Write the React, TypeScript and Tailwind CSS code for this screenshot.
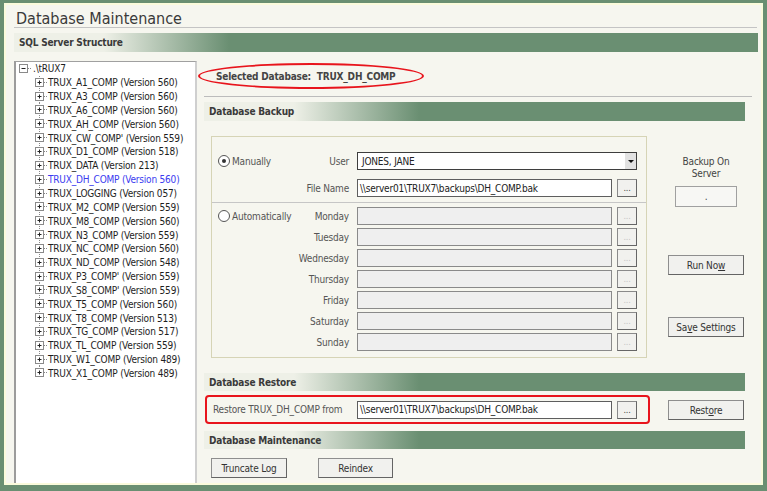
import React from 'react';

const FONT = { fontFamily: "'DejaVu Sans Condensed', 'DejaVu Sans', sans-serif" };

const items: [string, string, boolean?][] = [
  ['TRUX_A1_COMP', '560'],
  ['TRUX_A3_COMP', '560'],
  ['TRUX_A6_COMP', '560'],
  ['TRUX_AH_COMP', '560'],
  ["TRUX_CW_COMP'", '559'],
  ['TRUX_D1_COMP', '518'],
  ['TRUX_DATA', '213'],
  ['TRUX_DH_COMP', '560', true],
  ['TRUX_LOGGING', '057'],
  ['TRUX_M2_COMP', '559'],
  ['TRUX_M8_COMP', '560'],
  ['TRUX_N3_COMP', '559'],
  ['TRUX_NC_COMP', '560'],
  ['TRUX_ND_COMP', '548'],
  ["TRUX_P3_COMP'", '559'],
  ["TRUX_S8_COMP'", '559'],
  ['TRUX_T5_COMP', '560'],
  ['TRUX_T8_COMP', '513'],
  ['TRUX_TG_COMP', '517'],
  ['TRUX_TL_COMP', '559'],
  ['TRUX_W1_COMP', '489'],
  ['TRUX_X1_COMP', '489'],
];

function Bar({ title, className = '' }: { title: string; className?: string }) {
  return (
    <div
      className={`flex items-center pl-[5px] text-[10px] font-bold text-[#3a3a3a] bg-[linear-gradient(to_right,#eef0e7_90px,#6a8f72_215px)] ${className}`}
    >
      {title}
    </div>
  );
}

function Expander({ last, root }: { last?: boolean; root?: boolean }) {
  if (root) {
    return (
      <svg width="16" height="14" className="shrink-0">
        <rect x="2.5" y="2.5" width="8" height="8" fill="#fff" stroke="#8a8a8a" />
        <line x1="4.5" y1="6.5" x2="8.5" y2="6.5" stroke="#222" />
        <line x1="11" y1="6.5" x2="15" y2="6.5" stroke="#888" strokeDasharray="1 1" />
      </svg>
    );
  }
  return (
    <svg width="17" height="14" className="shrink-0 overflow-visible">
      <line x1="8.5" y1="0" x2="8.5" y2={last ? 7 : 14} stroke="#888" strokeDasharray="1 1" />
      <rect x="4.5" y="2.5" width="8" height="8" fill="#fff" stroke="#8a8a8a" />
      <line x1="6.5" y1="6.5" x2="10.5" y2="6.5" stroke="#222" />
      <line x1="8.5" y1="4.5" x2="8.5" y2="8.5" stroke="#222" />
      <line x1="13" y1="6.5" x2="17" y2="6.5" stroke="#888" strokeDasharray="1 1" />
    </svg>
  );
}

function Btn({ children, className = '' }: { children: React.ReactNode; className?: string }) {
  return (
    <div
      className={`flex items-center justify-center border border-[#8e8e8e] border-r-[#646464] border-b-[#646464] bg-[#f1f1ee] text-[10px] text-[#333] ${className}`}
    >
      {children}
    </div>
  );
}

function Dots({ disabled }: { disabled?: boolean }) {
  return (
    <div
      className={`w-[20px] h-[18px] ml-[5px] shrink-0 flex items-end justify-center pb-[3px] border border-[#8a8a8a] border-r-[#666] border-b-[#666] bg-[#f1f1ee] text-[9px] leading-[9px] ${disabled ? 'text-[#c4c4c4]' : 'text-[#444]'}`}
    >
      ...
    </div>
  );
}

function Radio({ checked, label }: { checked?: boolean; label: string }) {
  return (
    <div className="flex items-center w-[74px] shrink-0 whitespace-nowrap">
      <div className="w-[12px] h-[12px] shrink-0 rounded-full border border-[#555] bg-white flex items-center justify-center">
        {checked && <div className="w-[4px] h-[4px] rounded-full bg-[#333]" />}
      </div>
      <span className="ml-[2px] text-[#555]">{label}</span>
    </div>
  );
}

function Label({ text }: { text: string }) {
  return <div className="w-[57px] shrink-0 text-right text-[#555]">{text}</div>;
}

export default function App() {
  const days = ['Monday', 'Tuesday', 'Wednesday', 'Thursday', 'Friday', 'Saturday', 'Sunday'];
  return (
    <div
      className="w-[767px] h-[491px] bg-[#6a8f72] pt-[3px] px-[4px] pb-[6px] text-[10px] tracking-[-0.2px]"
      style={FONT}
    >
      <div className="h-full border-2 border-[#fbfbdc] bg-[#f6f6ef] flex flex-col pl-[8px] pr-[3px] overflow-hidden">
        <div className="h-[23px] shrink-0 border-b border-[#c4c4c4] flex items-end pl-[2px] mr-[1px] text-[16px] leading-[16px] tracking-normal text-[#3a3a3a]">
          Database Maintenance
        </div>
        <Bar title="SQL Server Structure" className="mt-[5px] h-[19px] shrink-0" />
        <div className="flex flex-1 mt-[9px] min-h-0">
          {/* Tree */}
          <div className="w-[183px] shrink-0 bg-white border-t border-t-[#a0a0a0] border-l-2 border-l-[#9c9c9c] border-r-2 border-r-[#cfcfcf] text-[#1e1e1e]">
            <div className="flex items-center h-[13.85px] pl-[1px]">
              <Expander root />
              <span>.\tRUX7</span>
            </div>
            {items.map(([name, ver, sel], i) => (
              <div key={name} className="flex items-center h-[13.85px] pl-[15px]">
                <Expander last={i === items.length - 1} />
                <span className={`whitespace-nowrap ${sel ? 'text-[#3b3bf0]' : ''}`}>
                  {name} (Version {ver})
                </span>
              </div>
            ))}
          </div>

          {/* Right side */}
          <div className="flex-1 flex flex-col pl-[7px]">
            <div className="ml-[-6px] mt-[2px] h-[26px] w-[226px] rounded-[50%] border-2 border-[#e8141c] flex items-center pl-[16px] font-bold text-[#444] whitespace-nowrap">
              Selected Database:&nbsp;&nbsp;TRUX_DH_COMP
            </div>
            <div className="mt-[7px] h-px w-[548px] bg-[#bcbcbc]" />
            <Bar title="Database Backup" className="mt-[5px] h-[19px] w-[541px]" />

            <div className="flex mt-[15px]">
              <div className="ml-[7px] w-[436px] h-[222px] border border-[#d6d4b6] flex flex-col">
                <div className="pt-[15px] pb-[5px] pl-[6px] border-b border-[#c6c6c6]">
                  <div className="flex items-center h-[18px]">
                    <Radio checked label="Manually" />
                    <Label text="User" />
                    <div className="ml-[8px] w-[280px] h-[18px] border border-[#3e3e3e] bg-white flex items-center">
                      <span className="flex-1 pl-[4px] text-[#222]">JONES, JANE</span>
                      <div className="w-[11px] h-full bg-[#e2e2e2] flex items-center justify-center">
                        <div className="w-0 h-0 border-l-[3px] border-r-[3px] border-t-[3px] border-l-transparent border-r-transparent border-t-[#111]" />
                      </div>
                    </div>
                  </div>
                  <div className="flex items-center h-[18px] mt-[9px]">
                    <div className="w-[74px] shrink-0" />
                    <Label text="File Name" />
                    <div className="ml-[8px] w-[255px] h-[18px] border border-[#5e5e5e] bg-white flex items-center pl-[2px] text-[#222] whitespace-nowrap overflow-hidden">
                      \\server01\TRUX7\backups\DH_COMP.bak
                    </div>
                    <Dots />
                  </div>
                </div>
                <div className="pt-[4px] pl-[6px] flex flex-col gap-[3px]">
                  {days.map((d, i) => (
                    <div key={d} className="flex items-center h-[18px]">
                      {i === 0 ? <Radio label="Automatically" /> : <div className="w-[74px] shrink-0" />}
                      <Label text={d} />
                      <div className="ml-[8px] w-[255px] h-[18px] border border-[#8a8a8a] bg-[#efefef]" />
                      <Dots disabled />
                    </div>
                  ))}
                </div>
              </div>

              <div className="ml-[21px] w-[76px] flex flex-col items-center">
                <div className="mt-[20px] text-center leading-[12px] text-[#444]">
                  Backup On
                  <br />
                  Server
                </div>
                <div className="mt-[6px] w-[62px] h-[21px] border border-[#a0a0a0] bg-[#f7f7f4] flex items-center justify-center text-[#444]">
                  .
                </div>
                <Btn className="mt-[48px] w-[76px] h-[20px]">
                  Run No<u>w</u>
                </Btn>
                <Btn className="mt-[42px] w-[76px] h-[20px]">
                  Sa<u>v</u>e Settings
                </Btn>
              </div>
            </div>

            <Bar title="Database Restore" className="mt-[15px] h-[18px] w-[541px]" />
            <div className="flex mt-[4px] items-start">
              <div className="ml-[1px] w-[445px] h-[29px] rounded-[4px] border-2 border-[#e8141c] flex items-center pl-[6px]">
                <div className="w-[144px] shrink-0 text-[#555] whitespace-nowrap">Restore TRUX_DH_COMP from</div>
                <div className="w-[255px] h-[18px] border border-[#5e5e5e] bg-white flex items-center pl-[2px] text-[#222] whitespace-nowrap overflow-hidden">
                  \\server01\TRUX7\backups\DH_COMP.bak
                </div>
                <Dots />
              </div>
              <Btn className="ml-[18px] mt-[5px] w-[76px] h-[20px]">
                Rest<u>o</u>re
              </Btn>
            </div>
            <Bar title="Database Maintenance" className="mt-[7px] h-[18px] w-[541px]" />
            <div className="flex mt-[9px]">
              <Btn className="ml-[7px] w-[76px] h-[20px]">Truncate Log</Btn>
              <Btn className="ml-[31px] w-[75px] h-[20px]">Reindex</Btn>
            </div>
          </div>
        </div>
      </div>
    </div>
  );
}
